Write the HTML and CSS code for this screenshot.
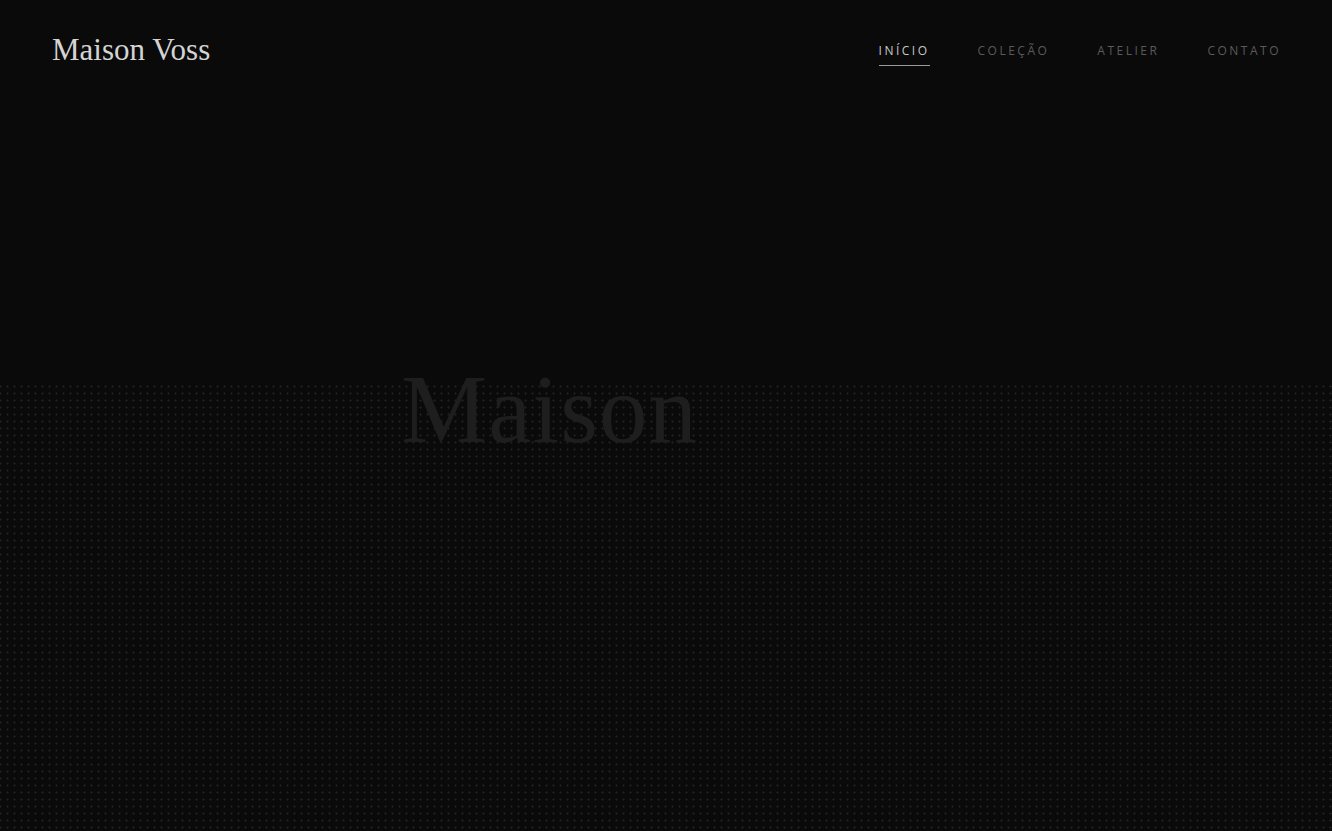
FILE: index.html
```html
<!DOCTYPE html>
<html lang="pt">
<head>
<meta charset="utf-8">
<title>Maison Voss</title>
<link rel="stylesheet" href="styles.css">
</head>
<body>
<header class="site-header">
  <a class="logo" href="#">Maison Voss</a>
  <nav class="nav">
    <a class="nav-link active" href="#">Início</a>
    <a class="nav-link" href="#">Coleção</a>
    <a class="nav-link" href="#">Atelier</a>
    <a class="nav-link" href="#">Contato</a>
  </nav>
</header>
<main class="hero">
  <h1 class="hero-title">Maison</h1>
</main>
</body>
</html>
```
FILE: styles.css
```css
* { box-sizing: border-box; }
html, body { height: 100%; }
body {
  margin: 0;
  background: #0a0a0a;
  color: #d0d0d0;
  font-family: "Liberation Serif", serif;
  overflow: hidden;
  display: flex;
  flex-direction: column;
}
.site-header {
  display: flex;
  justify-content: space-between;
  align-items: flex-start;
  padding: 32px 51px 0 52px;
  height: 100px;
}
.logo {
  font-family: "Liberation Serif", serif;
  font-size: 31px;
  color: #d4d4d4;
  text-decoration: none;
  line-height: 36px;
}
.nav {
  display: flex;
  gap: 48px;
  padding-top: 11px;
}
.nav-link {
  font-family: "Open Sans", sans-serif;
  font-size: 12px;
  letter-spacing: 2.5px;
  text-transform: uppercase;
  color: #5a5a5a;
  text-decoration: none;
  line-height: 16px;
  padding-bottom: 6px;
  border-bottom: 1px solid transparent;
}
.nav-link.active {
  color: #c8c8c8;
  border-bottom-color: #9a9a9a;
}
.hero {
  flex: 1;
  background-color: #0a0a0a;
  background-image:
    linear-gradient(#0a0a0a, #0a0a0a),
    radial-gradient(circle, #1e1e1e 0.9px, transparent 1.3px);
  background-size: 100% 283px, 7px 7px;
  background-repeat: no-repeat, repeat;
  background-position: 0 0, 4px 3px;
  padding: 255px 0 0 401px;
}
.hero-title {
  margin: 0;
  font-family: "Liberation Serif", serif;
  font-weight: 400;
  font-size: 97px;
  letter-spacing: 1px;
  line-height: 110px;
  color: #1e1e1e;
}
```
